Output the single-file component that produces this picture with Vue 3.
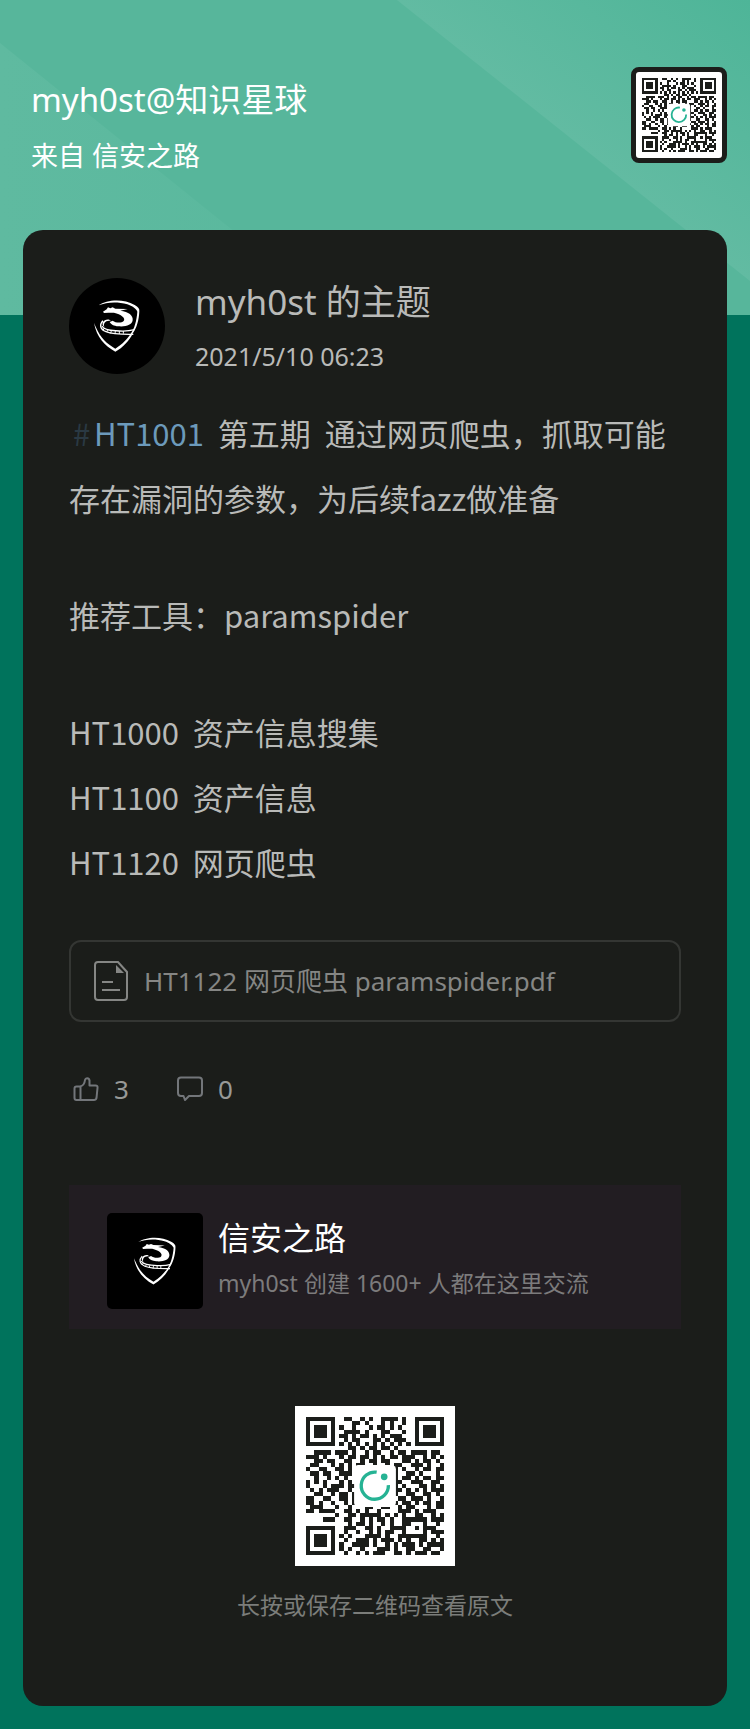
<script setup>
import { computed, h } from 'vue'

const topic = {
  brand: 'myh0st@知识星球',
  source: '来自 信安之路',
  author: 'myh0st 的主题',
  date: '2021/5/10 06:23',
  tools: '推荐工具：paramspider',
  tags: ['HT1000  资产信息搜集', 'HT1100  资产信息', 'HT1120  网页爬虫'],
  file: 'HT1122 网页爬虫 paramspider.pdf',
  likes: 3,
  comments: 0,
}

const group = { name: '信安之路', intro: 'myh0st 创建 1600+ 人都在这里交流' }

// Data modules; the three finder squares are drawn separately.
const modules = [
  '.........##..#.#..####.#.........',
  '...........##.#...#.#..#.........',
  '........#..#...#.##.#.#..........',
  '.........####.#...##...#.........',
  '........##.#.##.#.#.###..........',
  '.........#.##...##.#.###.........',
  '........#.#.#.#.#.#.#.#.#........',
  '..........##.#.##.##.#...........',
  '..####.###.#..#.##..#.##.####.##.',
  '###.#...#.##.##.#.#.##.###..#.#.#',
  '..##.##..##..#.##.##...##.#.##.#.',
  '.##...#.#.#.##..#..#.##..###.#..#',
  '#..##..##.#..........#.#..#.##.##',
  '.##.##..###..........#..##.#...#.',
  '..#..#.#.#...........#.##.#.##.##',
  '#.#.#...#.#..........##..###..##.',
  '#...#.###.##.........#.#...##.#.#',
  '.#.#.###..#..........##.#.#.#.###',
  '..##..#.##.#.........#..##..##.#.',
  '##..##..##.#..........##.###.#..#',
  '##.#..#..#.#.........#.##.#.##.##',
  '.###...#..#...##..##..#.##...#.##',
  '##.####..##.#.#..#....###.#.###..',
  '.......#..##.#####.#.#.#..##..#.#',
  '....###..##..#.#.##.#..######.###',
  '..........#.##.#..#.#..##...#..#.',
  '.........###..##.#..####..#.###..',
  '.........#..#..#.#.##..#....#.###',
  '........#.#...####.#..#######..#.',
  '.........#..###.#.###.#.#..##.#.#',
  '........#..####.#..#.#.###.#.####',
  '........#.#..#...###.#..##..##..#',
  '.........#..#.#.###..##.#.###.##.',
]
const qrPath = computed(() =>
  modules
    .flatMap((row, y) => [...row].map((c, x) => (c === '#' ? `M${x} ${y}h1v1h-1z` : '')))
    .join(''),
)

const finder = (x, y) =>
  h('g', { transform: `translate(${x} ${y})`, 'shape-rendering': 'crispEdges' }, [
    h('path', { d: 'M0 0h7v7H0zM1 1v5h5V1z', 'fill-rule': 'evenodd' }),
    h('rect', { x: 2, y: 2, width: 3, height: 3 }),
  ])

const QrCode = () =>
  h('svg', { viewBox: '0 0 33 33', width: '100%', height: '100%', fill: '#1b1d1a', role: 'img', 'aria-label': '二维码' }, [
    h('path', { d: qrPath.value, 'shape-rendering': 'crispEdges' }),
    finder(0, 0),
    finder(26, 0),
    finder(0, 26),
    h('rect', { x: 11.5, y: 11.5, width: 10, height: 10, rx: 1, fill: '#fff' }),
    h('path', { d: 'M16.9 13.2a3.25 3.25 0 1 0 2.8 3.1', fill: 'none', stroke: '#26b394', 'stroke-width': 0.8 }),
    h('circle', { cx: 18.7, cy: 14.3, r: 0.8, fill: '#26b394' }),
  ])

const Emblem = () =>
  h('svg', { viewBox: '0 0 96 96', width: '100%', height: '100%', 'aria-hidden': 'true' }, [
    h('g', { transform: 'translate(21 7) scale(0.3333)', fill: '#fff' }, [
      h('path', { d: 'M26 61C50 44 100 40 134 60C145 66 149 71 148 79C147 106 140 130 127 147L121 148C134 130 140 106 142 80C139 71 127 63 112 58C82 49 50 51 26 61Z' }),
      h('path', { d: 'M39 80L50 73L54 67L61 70L68 67L76 71L113 72L91 77C116 80 130 91 128 106C126 120 108 126 85 124C72 123 62 118 59 111L68 107C77 114 94 115 101 108C108 99 93 88 72 83L55 83L42 84Z' }),
      h('path', { d: 'M63 108C46 105 39 116 43 126C31 117 41 101 58 104Z' }),
      h('path', { d: 'M39 107C28 118 29 132 48 140C69 149 99 148 130 148', fill: 'none', stroke: '#fff', 'stroke-width': 4 }),
      h('path', { d: 'M36 123C44 136 66 137 88 138C104 139 119 138 133 134', fill: 'none', stroke: '#fff', 'stroke-width': 4 }),
      h('path', { d: 'M43 129l-4 7M53 134l-3 7M64 137l-2 8M76 138l-1 9M88 138v9M100 138v8', stroke: '#fff', 'stroke-width': 3 }),
      h('path', { d: 'M12 114L17 125C32 160 51 176 76 191C99 177 112 161 121 148L128 146C117 168 99 187 76 200C44 182 20 157 12 114Z' }),
    ]),
  ])
</script>

<template>
  <div class="page">
    <svg class="backdrop" viewBox="0 0 750 315" preserveAspectRatio="none" aria-hidden="true">
      <defs>
        <linearGradient id="ray" x1="0" y1="1" x2="1" y2="0">
          <stop offset="0.5" stop-color="#62bba2" />
          <stop offset="1" stop-color="#4eb598" />
        </linearGradient>
        <linearGradient id="glow" x1="0" y1="0" x2="1" y2="0">
          <stop offset="0" stop-color="#5fbaa0" />
          <stop offset="1" stop-color="#59b89d" />
        </linearGradient>
      </defs>
      <rect width="750" height="315" fill="#57b69b" />
      <path d="M397 0H750V281Z" fill="url(#ray)" />
      <path d="M0 43L338 315H0Z" fill="url(#glow)" />
    </svg>

    <header class="top">
      <div class="heading">
        <h1>{{ topic.brand }}</h1>
        <p>{{ topic.source }}</p>
      </div>
      <div class="qr qr-small"><QrCode /></div>
    </header>

    <main class="card">
      <section class="author">
        <div class="avatar"><Emblem /></div>
        <div>
          <h2>{{ topic.author }}</h2>
          <time datetime="2021-05-10T06:23">{{ topic.date }}</time>
        </div>
      </section>

      <article class="content">
        <p><a href="#HT1001"><span class="hash">#</span><span>HT1001</span></a>{{ '  第五期  通过网页爬虫，抓取可能存在漏洞的参数，为后续fazz做准备' }}</p>
        <p>{{ topic.tools }}</p>
        <p><template v-for="(tag, i) in topic.tags" :key="tag"><br v-if="i">{{ tag }}</template></p>
      </article>

      <a class="file" href="#file">
        <svg width="34" height="40" viewBox="0 0 34 40" fill="none" stroke="currentColor" stroke-width="2" aria-hidden="true">
          <path d="M4 1H24L33 11V36Q33 39 30 39H4Q1 39 1 36V4Q1 1 4 1Z" />
          <path d="M22 4V12H30Z" fill="currentColor" stroke="none" />
          <path d="M8 21H19M8 29H26" />
        </svg>
        <span>{{ topic.file }}</span>
      </a>

      <div class="stats">
        <button type="button" aria-label="点赞">
          <svg width="26" height="26" viewBox="0 0 26 26" fill="none" stroke="#73767a" stroke-width="2" stroke-linejoin="round" aria-hidden="true">
            <path d="M7 10.500C10 10 11.500 8 12 4C12.500 1.500 16 1.500 16.500 4.500V9.500H22.500Q25 9.500 24.500 12L23.500 22Q23 24 21 24H3.500Q1.500 24 1.500 22V12.500Q1.500 10.500 3.500 10.500ZM7.500 10.500V24" />
          </svg>
          <span>{{ topic.likes }}</span>
        </button>
        <button type="button" aria-label="评论">
          <svg width="26" height="26" viewBox="0 0 26 26" fill="none" stroke="#73767a" stroke-width="2" stroke-linejoin="round" aria-hidden="true">
            <path d="M4 1.500H22Q25 1.500 25 4.500V17Q25 20 22 20H12L8 24L6.500 20H4Q1 20 1 17V4.500Q1 1.500 4 1.500Z" />
          </svg>
          <span>{{ topic.comments }}</span>
        </button>
      </div>

      <section class="group">
        <div class="logo"><Emblem /></div>
        <div class="group-text">
          <h3>{{ group.name }}</h3>
          <p>{{ group.intro }}</p>
        </div>
      </section>

      <footer class="scan">
        <div class="qr qr-large"><QrCode /></div>
        <p>长按或保存二维码查看原文</p>
      </footer>
    </main>
  </div>
</template>

<style>
body {
  margin: 0;
  background: #00735c;
}
</style>

<style scoped>
.page {
  position: relative;
  padding: 0 23px 23px;
  background: #00735c;
  color: #b9bab8;
  font-family: "Noto Sans", "Noto Sans CJK SC", sans-serif;
}
h1, h2, h3, p {
  margin: 0;
  font-weight: 400;
}
.backdrop {
  position: absolute;
  top: 0;
  left: 0;
  width: 100%;
  height: 315px;
}
.top {
  position: relative;
  display: flex;
  justify-content: space-between;
  align-items: flex-start;
  padding: 67px 0 56px 8px;
  color: #fff;
}
.heading {
  padding-top: 11px;
}
.heading h1 {
  font-size: 33px;
  line-height: 44px;
}
.heading p {
  margin-top: 16px;
  font-size: 27px;
  line-height: 36px;
}
.qr {
  box-sizing: border-box;
  background: #fff;
}
.qr svg {
  display: block;
}
.qr-small {
  width: 96px;
  height: 96px;
  padding: 6px;
  border: 5px solid #1b1d1a;
  border-radius: 8px;
}
.qr-large {
  width: 160px;
  height: 160px;
  padding: 11px;
}
.card {
  position: relative;
  padding: 48px 46px 85px;
  border-radius: 20px;
  background: #1b1d1a;
}
.author {
  display: flex;
  align-items: center;
  gap: 30px;
}
.avatar, .logo {
  box-sizing: border-box;
  flex: none;
  width: 96px;
  height: 96px;
  background: #000;
}
.avatar {
  border-radius: 50%;
}
.author h2 {
  font-size: 35px;
  line-height: 44px;
}
.author time {
  display: block;
  margin-top: 16px;
  font-size: 25px;
  line-height: 32px;
}
.content {
  display: flex;
  flex-direction: column;
  gap: 52px;
  margin-top: 26px;
  font-family: "Noto Sans CJK SC", sans-serif;
  font-size: 31px;
  line-height: 65px;
  white-space: pre-wrap;
}
.content a {
  display: inline-flex;
  align-items: baseline;
  color: #6c9abb;
  line-height: 40px;
  text-decoration: none;
}
.hash {
  width: 25px;
  color: #2a3943;
  text-align: center;
}
.file {
  display: flex;
  align-items: center;
  gap: 16px;
  box-sizing: border-box;
  min-height: 82px;
  margin-top: 46px;
  padding: 0 23px;
  border: 2px solid #343633;
  border-radius: 12px;
  color: #858684;
  font-size: 26px;
  line-height: 36px;
  text-decoration: none;
}
.stats {
  display: flex;
  gap: 48px;
  margin-top: 51px;
  padding-left: 4px;
}
.stats button {
  display: flex;
  align-items: center;
  gap: 15px;
  padding: 0;
  border: 0;
  background: none;
  color: #989997;
  font: inherit;
  font-size: 26px;
  line-height: 32px;
}
.group {
  display: flex;
  align-items: center;
  gap: 15px;
  box-sizing: border-box;
  min-height: 144px;
  margin-top: 80px;
  padding: 8px 38px 0;
  background: #221d22;
}
.logo {
  padding: 4px;
  border-radius: 5px;
}
.group-text {
  padding-bottom: 7px;
}
.group h3 {
  color: #fff;
  font-size: 32px;
  line-height: 44px;
}
.group p {
  margin-top: 7px;
  color: #7c7b7c;
  font-size: 23px;
  line-height: 32px;
}
.scan {
  display: flex;
  flex-direction: column;
  align-items: center;
  gap: 23px;
  margin-top: 77px;
  color: #7b7d7a;
  font-size: 23px;
  line-height: 32px;
}
</style>
